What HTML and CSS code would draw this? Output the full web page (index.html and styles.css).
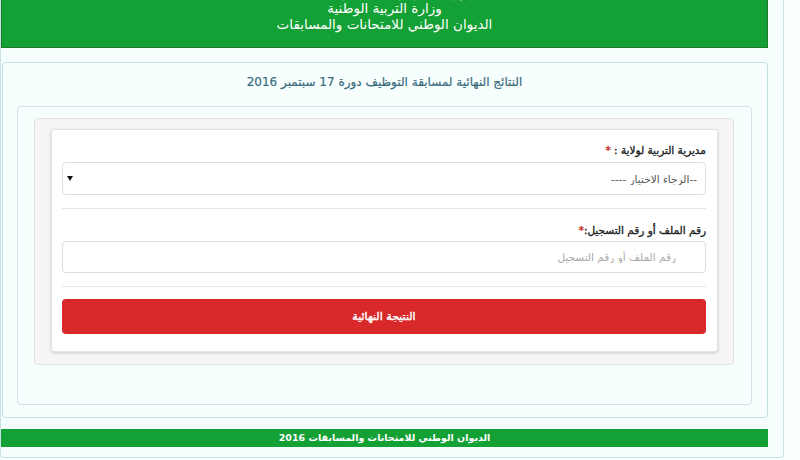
FILE: index.html
```html
<!DOCTYPE html>
<html lang="ar">
<head>
<meta charset="utf-8">
<title>الديوان الوطني للامتحانات والمسابقات</title>
<link rel="stylesheet" href="styles.css">
</head>
<body>
<div class="page">
  <header class="header">
    <div class="header-line">الجمهورية الجزائرية الديمقراطية الشعبية</div>
    <div class="header-line">وزارة التربية الوطنية</div>
    <div class="header-line">الديوان الوطني للامتحانات والمسابقات</div>
  </header>

  <section class="panel">
    <h1 class="panel-title">النتائج النهائية لمسابقة التوظيف دورة 17 سبتمبر 2016</h1>
    <div class="box">
      <div class="well">
        <form class="card">
          <label class="field-label">مديرية التربية لولاية : <span class="req">*</span></label>
          <div class="select-wrap">
            <select class="control select">
              <option>--الرجاء الاختيار ----</option>
            </select>
          </div>
          <hr class="sep">
          <label class="field-label">رقم الملف أو رقم التسجيل:<span class="req">*</span></label>
          <input class="control input" type="text" placeholder="رقم الملف أو رقم التسجيل">
          <hr class="sep">
          <button class="btn" type="button">النتيجة النهائية</button>
        </form>
      </div>
    </div>
  </section>

  <footer class="footer">الديوان الوطني للامتحانات والمسابقات 2016</footer>
</div>
</body>
</html>
```

FILE: styles.css
```css
html, body {
  margin: 0;
  padding: 0;
}
body {
  background: #fbfefe;
  font-family: "DejaVu Sans", "Noto Sans", sans-serif;
  overflow: hidden;
  direction: ltr;
}
.page {
  width: 784px;
  box-sizing: border-box;
  background: #f6fdfd;
  border: 1px solid #c7e1e6;
  border-top: none;
  border-radius: 0 0 4px 4px;
  padding: 0 15px 10px 0;
}
.header {
  direction: rtl;
  margin-top: -16px;
  background: #13a034;
  border: 1px solid #1b7a2b;
  border-top: none;
  color: #ffffff;
  text-align: center;
  font-size: 13.5px;
  line-height: 16px;
  padding: 0 0 15px;
}
.panel {
  direction: rtl;
  margin: 14px 0 0 1px;
  background: #f6fefe;
  border: 1px solid #c4dfe4;
  border-radius: 4px;
  padding: 0 15px 12px 14px;
}
.panel-title {
  margin: 0;
  padding: 9px 0 14px;
  font-size: 12px;
  line-height: 20px;
  font-weight: normal;
  text-align: center;
  color: #3a6b7c;
  -webkit-text-stroke: 0.2px #3a6b7c;
}
.box {
  border: 1px solid #cfe3e7;
  border-radius: 4px;
  padding: 11px 17px 39px 16px;
}
.well {
  background: #f5f5f5;
  border: 1px solid #e1e1e1;
  border-radius: 4px;
  padding: 10px 15px 12px 16px;
}
.card {
  display: flex;
  flex-direction: column;
  background: #ffffff;
  border: 1px solid #e3e3e3;
  border-radius: 3px;
  box-shadow: 0 1px 3px rgba(0, 0, 0, 0.18);
  padding: 11px 11px 17px 10px;
  margin: 0;
}
.field-label {
  display: block;
  font-size: 10.5px;
  line-height: 18px;
  font-weight: normal;
  color: #222222;
  -webkit-text-stroke: 0.35px #222222;
  text-align: right;
}
.req {
  color: #c9302c;
  -webkit-text-stroke: 0.35px #c9302c;
}
.select-wrap {
  position: relative;
  margin-top: 3px;
}
.select-wrap::after {
  content: "";
  position: absolute;
  left: 5px;
  top: 14px;
  border-left: 3px solid transparent;
  border-right: 3px solid transparent;
  border-top: 5px solid #111111;
}
.control {
  display: block;
  width: 100%;
  box-sizing: border-box;
  height: 33px;
  margin: 0;
  border: 1px solid #dedede;
  border-radius: 4px;
  background: #ffffff;
  font-family: "DejaVu Sans", "Noto Sans", sans-serif;
  font-size: 10.5px;
  direction: rtl;
  outline: none;
}
.select {
  -webkit-appearance: none;
  appearance: none;
  color: #555555;
  padding: 0 8px 0 20px;
}
.input {
  height: 32px;
  margin-top: 2px;
  padding: 0 29px 0 8px;
  color: #555555;
}
.input::placeholder {
  color: #a9a9a9;
}
.sep {
  border: none;
  border-top: 1px solid #e6e6e6;
  margin: 13px 0 12px;
  height: 0;
}
.btn {
  display: block;
  width: 100%;
  height: 35px;
  margin: 0;
  border: none;
  border-radius: 4px;
  background: #d9282a;
  color: #ffffff;
  font-family: "DejaVu Sans", "Noto Sans", sans-serif;
  font-size: 11px;
  font-weight: normal;
  -webkit-text-stroke: 0.4px #ffffff;
  cursor: pointer;
}
.footer {
  direction: rtl;
  margin-top: 11px;
  background: #13a034;
  color: #ffffff;
  text-align: center;
  font-size: 9.5px;
  font-weight: bold;
  line-height: 18px;
  height: 18px;
}
```
